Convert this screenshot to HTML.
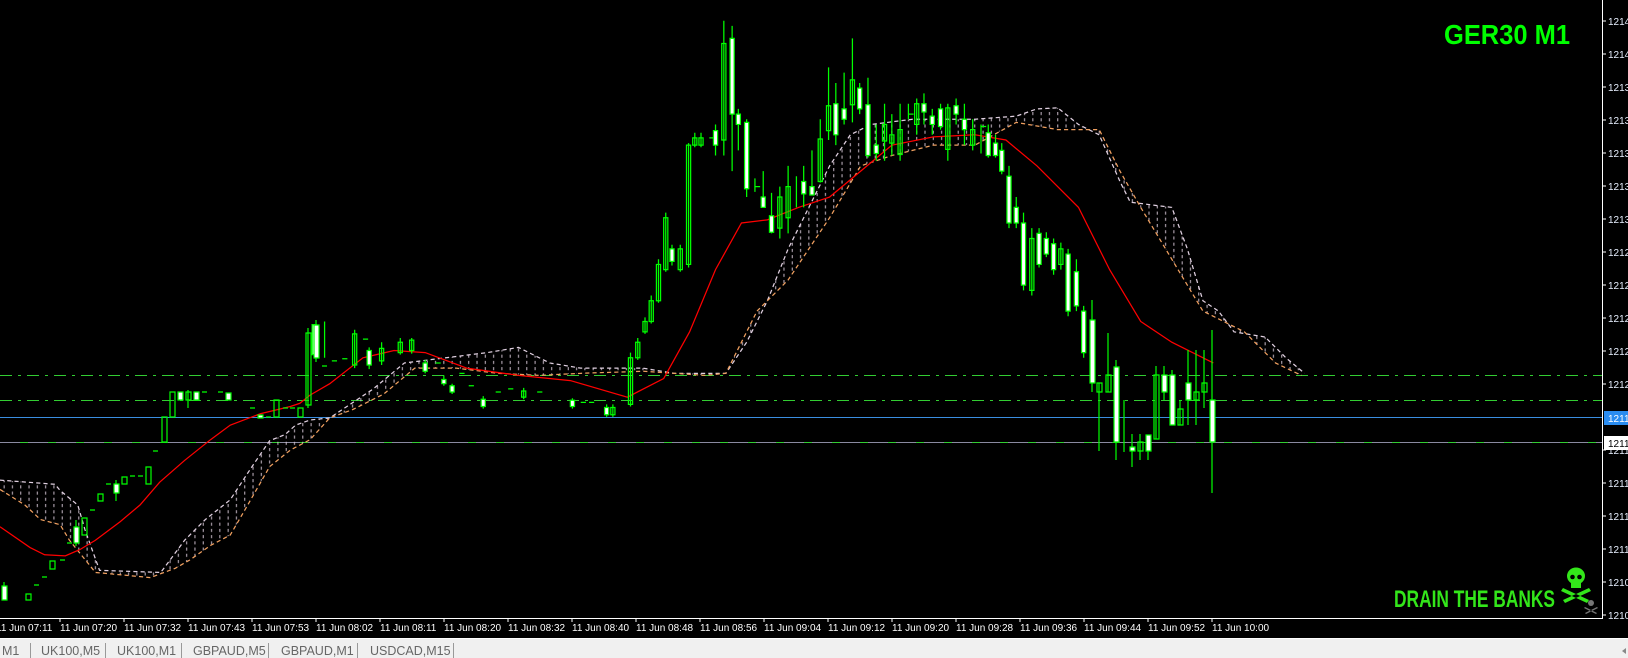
<!DOCTYPE html>
<html><head><meta charset="utf-8"><style>
html,body{margin:0;padding:0;background:#000;width:1628px;height:658px;overflow:hidden}
svg{display:block}
</style></head><body>
<svg width="1628" height="658" viewBox="0 0 1628 658" xmlns="http://www.w3.org/2000/svg" font-family="'Liberation Sans',sans-serif">
<defs>
<pattern id="hatch" width="8" height="6" patternUnits="userSpaceOnUse">
<line x1="4" y1="0" x2="4" y2="3" stroke="#d8c8d8" stroke-width="1"/>
</pattern>
</defs>
<rect width="1628" height="658" fill="#000"/>

<line x1="0" y1="375.5" x2="1602" y2="375.5" stroke="#32cd32" stroke-width="1" stroke-dasharray="12 6 3 6"/>
<line x1="0" y1="400.5" x2="1602" y2="400.5" stroke="#32cd32" stroke-width="1" stroke-dasharray="12 6 3 6"/>
<line x1="0" y1="417.5" x2="1602" y2="417.5" stroke="#3a8ee0" stroke-width="1"/>
<line x1="0" y1="442.5" x2="1602" y2="442.5" stroke="#32cd32" stroke-width="1"/>
<line x1="0" y1="442.5" x2="1602" y2="442.5" stroke="#8a8aa0" stroke-width="1" stroke-dasharray="20 8"/>

<g transform="scale(1.037)">
<polygon fill="url(#hatch)" opacity="0.9" points="0,463 53,467 58,473 75,487 82,511 96,550 155,552 164,540 178,521 198,501 222,482 241,453 260,425 275,419 285,410 299,405 318,403 360,375 390,350 430,345 470,340 500,335 530,350 560,355 620,355 650,360 700,360 720,330 740,290 760,240 780,200 800,160 820,130 840,120 880,115 940,115 980,112 1000,105 1020,104 1040,120 1060,130 1080,175 1090,195 1130,200 1145,240 1160,290 1175,300 1190,320 1220,325 1240,345 1258,360 1255,362 1230,350 1200,320 1160,300 1130,250 1100,200 1080,165 1060,125 1020,125 980,118 940,140 900,140 860,150 830,160 800,210 780,240 760,270 730,300 700,360 680,362 620,358 560,360 520,362 480,360 440,355 400,355 370,380 340,395 318,403 299,424 280,434 260,450 236,492 222,516 203,526 183,540 169,548 145,557 92,552 67,521 58,506 39,501 24,487 0,472"/>
<polyline fill="none" stroke="#e0d0e0" stroke-width="1.2" stroke-dasharray="4 3" points="0,463 53,467 58,473 75,487 82,511 96,550 155,552 164,540 178,521 198,501 222,482 241,453 260,425 275,419 285,410 299,405 318,403 360,375 390,350 430,345 470,340 500,335 530,350 560,355 620,355 650,360 700,360 720,330 740,290 760,240 780,200 800,160 820,130 840,120 880,115 940,115 980,112 1000,105 1020,104 1040,120 1060,130 1080,175 1090,195 1130,200 1145,240 1160,290 1175,300 1190,320 1220,325 1240,345 1258,360"/>
<polyline fill="none" stroke="#f0a060" stroke-width="1.2" stroke-dasharray="4 3" points="0,472 24,487 39,501 58,506 67,521 92,552 145,557 169,548 183,540 203,526 222,516 236,492 260,450 280,434 299,424 318,403 340,395 370,380 400,355 440,355 480,360 520,362 560,360 620,358 680,362 700,360 730,300 760,270 780,240 800,210 830,160 860,150 900,140 940,140 980,118 1020,125 1060,125 1080,165 1100,200 1130,250 1160,300 1200,320 1230,350 1255,362"/>
<polyline fill="none" stroke="#ff0000" stroke-width="1.2" points="0,508 29,528 43,535 63,536 77,530 92,521 116,503 135,487 154,465 178,444 203,424 222,410 251,399 280,392 289,389 299,381 318,370 350,345 380,338 410,340 450,355 500,362 550,367 605,383 640,365 665,320 690,260 715,215 740,212 770,200 800,190 830,165 860,140 900,132 940,130 970,135 1000,160 1040,200 1070,260 1100,310 1130,330 1170,350"/>
</g>

<g stroke="#00ff00" stroke-width="1.2" fill="none" transform="scale(1.037)">
<path d="M313 310V345M342 318V355M356 335V356M368 330V352M386 326V342M397 326V341M410 347V360M428 362V372M436 370V380M466 382V394M505 374V385M552 384V394M585 390V402M591 390V402M608 340V392M615 326V347M622 306V322M628 285V312M635 250V292M642 205V262M648 236V256M656 236V262M664 138V258M670 128V142M676 128V142M690 120V150M698 20V150M706 25V165M712 105V145M720 115V190M728 172V185M736 165V200M744 186V225M752 180V230M760 160V225M768 170V200M775 160V200M783 145V180M791 115V176M799 65V135M806 80V140M814 70V120M822 37V118M829 80V110M837 75V152M845 120V155M853 100V155M860 110V150M868 100V155M876 100V115M884 95V130M891 90V120M899 105V130M907 100V125M914 100V155M922 95V120M930 100V140M938 115V145M946 120V148M953 120V152M960 130V152M966 138V168M973 160V220M980 190V220M987 205V280M995 220V285M1002 220V258M1009 224V248M1016 230V265M1023 234V260M1030 240V305M1038 250V300M1045 295V345"/>
<path d="M320 348h5M330 346h5M350 327h5M420 350h5M443 360h5M452 372h5M478 378h5M490 375h5M518 378h5M560 388h5M568 388h5M684 133h5M728 180h5M876 110h5M946 122h5"/>
<path d="M340 322h4v30h-4zM366 336h4v12h-4zM384 330h4v10h-4zM395 328h4v10h-4zM503 377h4v6h-4zM589 393h4v7h-4zM606 345h4v45h-4zM613 330h4v15h-4zM620 310h4v10h-4zM626 290h4v20h-4zM633 255h4v35h-4zM640 210h4v50h-4zM654 240h4v20h-4zM662 140h4v115h-4zM668 133h4v7h-4zM674 133h4v7h-4zM696 42h4v93h-4zM750 190h4v30h-4zM758 180h4v30h-4zM789 134h4v41h-4zM797 102h4v24h-4zM820 77h4v24h-4zM851 120h4v16h-4zM858 130h4v8h-4zM866 125h4v24h-4zM882 100h4v20h-4zM912 104h4v40h-4zM936 125h4v15h-4zM993 230h4v50h-4zM1021 240h4v15h-4z"/>
<path fill="#fff" d="M301 313h4v29h-4zM354 338h4v14h-4zM408 350h4v8h-4zM426 366h4v4h-4zM434 372h4v6h-4zM464 385h4v7h-4zM550 386h4v6h-4zM583 393h4v7h-4zM646 240h4v12h-4zM688 126h4v14h-4zM704 37h4v73h-4zM710 110h4v10h-4zM718 118h4v64h-4zM734 190h4v10h-4zM742 208h4v16h-4zM773 175h4v12h-4zM781 180h4v8h-4zM804 100h4v30h-4zM812 105h4v10h-4zM827 85h4v20h-4zM835 101h4v49h-4zM843 140h4v8h-4zM889 100h4v8h-4zM897 112h4v8h-4zM905 105h4v17h-4zM920 102h4v8h-4zM928 115h4v10h-4zM951 128h4v22h-4zM958 138h4v12h-4zM964 145h4v20h-4zM971 170h4v45h-4zM978 200h4v15h-4zM985 215h4v60h-4zM1000 225h4v30h-4zM1007 230h4v15h-4zM1014 235h4v25h-4zM1028 245h4v55h-4zM1036 262h4v33h-4zM1043 300h4v40h-4z"/>
</g>

<g stroke="#00ff00" stroke-width="1.2" fill="none">
<path d="M4 582V600M76 520V546M116 480V501M188 390V408M308 328V408M316 320V362"/>
<path d="M34 585h5M42 577h5M60 560h5M67 543h5M90 510h5M106 484h5M130 476h5M138 476h5M153 451h5M202 392h5M218 392h5M250 408h5M266 417h5M283 408h5M290 408h5M322 366h5"/>
<path d="M26 594h5v6h-5zM50 561h5v8h-5zM82 518h5v17h-5zM98 494h5v7h-5zM122 477h5v7h-5zM146 467h5v17h-5zM162 417h5v25h-5zM170 392h5v25h-5zM186 392h5v8h-5zM274 400h5v17h-5zM298 408h5v9h-5zM306 333h5v72h-5z"/>
<path fill="#fff" d="M2 586h5v14h-5zM74 527h5v16h-5zM114 484h5v9h-5zM178 392h5v8h-5zM194 392h5v8h-5zM226 393h5v7h-5zM258 415h5v3h-5zM314 325h5v33h-5z"/>
</g>

<g stroke="#00ff00" stroke-width="1.2" fill="none">
<path d="M1092 300V392M1099 383V451M1108 333V392M1116 360V460M1124 400V452M1132 434V467M1140 434V460M1148 435V460M1156 366V439M1164 366V400M1172 370V425M1180 400V425M1188 350V425M1196 350V425M1204 350V408M1212 330V493"/>
<path d="M1097 383h5v9h-5zM1106 375h5v17h-5zM1138 442h5v9h-5zM1154 375h5v64h-5zM1178 409h5v16h-5zM1194 392h5v8h-5zM1202 383h5v9h-5z"/>
<path fill="#fff" d="M1090 320h5v63h-5zM1114 367h5v75h-5zM1130 447h5v4h-5zM1146 435h5v16h-5zM1162 375h5v17h-5zM1170 375h5v50h-5zM1186 383h5v17h-5zM1210 400h5v42h-5z"/>
</g>

<line x1="1602.5" y1="0" x2="1602.5" y2="619" stroke="#fff" stroke-width="1"/>
<line x1="0" y1="618.5" x2="1603" y2="618.5" stroke="#fff" stroke-width="1"/>

<g fill="#e8f0ff" font-size="10">
<text x="1608" y="25">1214</text><text x="1608" y="58">1214</text><text x="1608" y="91">1213</text><text x="1608" y="124">1213</text><text x="1608" y="157">1213</text><text x="1608" y="190">1213</text><text x="1608" y="223">1213</text><text x="1608" y="256">1212</text><text x="1608" y="289">1212</text><text x="1608" y="322">1212</text><text x="1608" y="355">1212</text><text x="1608" y="388">1212</text><text x="1608" y="454">1211</text><text x="1608" y="487">1211</text><text x="1608" y="520">1211</text><text x="1608" y="553">1211</text><text x="1608" y="586">1210</text><text x="1608" y="619">1210</text>
</g>
<g stroke="#fff"><path d="M1603 21h3M1603 54h3M1603 87h3M1603 120h3M1603 153h3M1603 186h3M1603 219h3M1603 252h3M1603 285h3M1603 318h3M1603 351h3M1603 384h3M1603 450h3M1603 483h3M1603 516h3M1603 549h3M1603 582h3M1603 615h3"/></g>
<rect x="1604" y="411" width="24" height="14" fill="#2a8cf0"/>
<text x="1608" y="422" fill="#fff" font-size="10">1211</text>
<rect x="1604" y="436" width="24" height="14" fill="#fff"/>
<text x="1608" y="447" fill="#000" font-size="10">1211</text>

<g fill="#fff" font-size="10">
<text x="-4" y="631">11 Jun 07:11</text><text x="60" y="631">11 Jun 07:20</text><text x="124" y="631">11 Jun 07:32</text><text x="188" y="631">11 Jun 07:43</text><text x="252" y="631">11 Jun 07:53</text><text x="316" y="631">11 Jun 08:02</text><text x="380" y="631">11 Jun 08:11</text><text x="444" y="631">11 Jun 08:20</text><text x="508" y="631">11 Jun 08:32</text><text x="572" y="631">11 Jun 08:40</text><text x="636" y="631">11 Jun 08:48</text><text x="700" y="631">11 Jun 08:56</text><text x="764" y="631">11 Jun 09:04</text><text x="828" y="631">11 Jun 09:12</text><text x="892" y="631">11 Jun 09:20</text><text x="956" y="631">11 Jun 09:28</text><text x="1020" y="631">11 Jun 09:36</text><text x="1084" y="631">11 Jun 09:44</text><text x="1148" y="631">11 Jun 09:52</text><text x="1212" y="631">11 Jun 10:00</text>
</g>
<g stroke="#fff"><path d="M60 619v3M124 619v3M188 619v3M252 619v3M316 619v3M380 619v3M444 619v3M508 619v3M572 619v3M636 619v3M700 619v3M764 619v3M828 619v3M892 619v3M956 619v3M1020 619v3M1084 619v3M1148 619v3M1212 619v3"/></g>

<text x="1444" y="44" fill="#00ff00" font-family="'Liberation Sans Narrow','Liberation Sans',sans-serif" font-weight="bold" font-size="28" textLength="126" lengthAdjust="spacingAndGlyphs">GER30 M1</text>
<text x="1394" y="607" fill="#33e61a" font-family="'Liberation Sans Narrow','Liberation Sans',sans-serif" font-weight="bold" font-size="24" textLength="161" lengthAdjust="spacingAndGlyphs">DRAIN THE BANKS</text>
<g fill="#33e61a">
<ellipse cx="1576" cy="576" rx="9" ry="8.5"/><rect x="1571" y="581" width="10" height="7"/>
<path d="M1563 588l26 12l-2 3l-26 -12zM1589 588l-26 12l2 3l26 -12z"/>
</g>
<g fill="#000"><circle cx="1572.5" cy="577" r="2.3"/><circle cx="1579.5" cy="577" r="2.3"/></g>
<g fill="#777"><circle cx="1591" cy="603" r="3"/><path d="M1585 607l12 6l-1 1l-12-6zM1597 607l-12 6l1 1l12-6z"/></g>

<rect x="0" y="638" width="1628" height="20" fill="#f0f0f0"/>
<line x1="0" y1="638.5" x2="1628" y2="638.5" stroke="#fff"/>
<g fill="#666" font-size="12.5">
<text x="2" y="655">M1</text><text x="41" y="655">UK100,M5</text><text x="117" y="655">UK100,M1</text><text x="193" y="655">GBPAUD,M5</text><text x="281" y="655">GBPAUD,M1</text><text x="370" y="655">USDCAD,M15</text>
</g>
<g stroke="#999"><path d="M30.5 643v15M105.5 643v15M181.5 643v15M268.5 643v15M357.5 643v15M453.5 643v15"/></g>
<path d="M1626 648l-4 3l4 3z" fill="#888"/>
</svg>
</body></html>
